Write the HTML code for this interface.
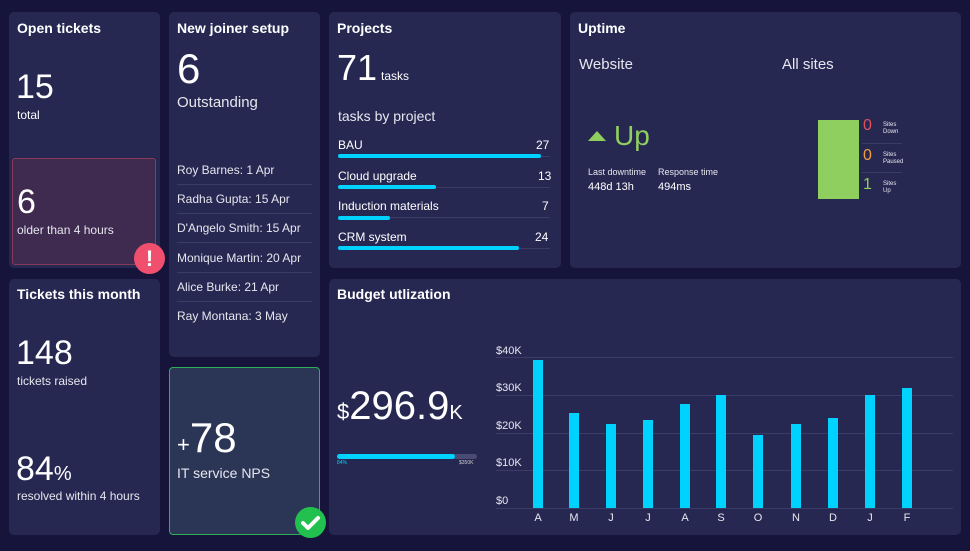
<!DOCTYPE html>
<html><head><meta charset="utf-8"><style>
*{margin:0;padding:0;box-sizing:border-box}
body{width:970px;height:551px;background:#16143a;font-family:"Liberation Sans",sans-serif;color:#fff;position:relative;overflow:hidden}
.c{position:absolute;background:#272852;border-radius:5px}
.a{position:absolute;white-space:nowrap}
.t{font-weight:bold;font-size:14px}
.li{position:absolute;left:8px;width:135px;font-size:12px;color:#e6e6ee;border-bottom:1px solid #3a3b66;height:29px;line-height:29px}
.bar{position:absolute;height:4px;background:#00d2ff;border-radius:2px}
.trk{position:absolute;height:1px;background:#3a3b66}
.g{position:absolute;left:496px;width:457px;height:1px;background:#3a3b66}
.b{position:absolute;width:10px;background:#00d2ff;bottom:43px}
.m{position:absolute;top:512px;font-size:11px;color:#e6e6ee;width:20px;text-align:center}
.y{position:absolute;left:496px;font-size:11px;color:#e6e6ee}
</style></head><body>
<!-- Open tickets -->
<div class="c" style="left:9px;top:12px;width:151px;height:256px"></div>
<div class="a t" style="left:17px;top:20px">Open tickets</div>
<div class="a" style="left:16px;top:68px;font-size:34px">15</div>
<div class="a" style="left:17px;top:108px;font-size:12px">total</div>
<div class="a" style="left:12px;top:158px;width:144px;height:107px;background:#3f2a50;border:1px solid #8a3a5a;border-radius:3px"></div>
<div class="a" style="left:17px;top:183px;font-size:34px">6</div>
<div class="a" style="left:17px;top:223px;font-size:12px;color:#e6e6ee">older than 4 hours</div>
<div class="a" style="left:134px;top:243px;width:31px;height:31px;border-radius:50%;background:#f0506e;text-align:center;font-weight:bold;font-size:22px;line-height:31px">!</div>
<!-- Tickets this month -->
<div class="c" style="left:9px;top:279px;width:151px;height:256px"></div>
<div class="a t" style="left:17px;top:286px">Tickets this month</div>
<div class="a" style="left:16px;top:334px;font-size:34px">148</div>
<div class="a" style="left:17px;top:374px;font-size:12px;color:#e6e6ee">tickets raised</div>
<div class="a" style="left:16px;top:450px;font-size:34px">84<span style="font-size:20px">%</span></div>
<div class="a" style="left:17px;top:489px;font-size:12px;color:#e6e6ee">resolved within 4 hours</div>
<!-- New joiner -->
<div class="c" style="left:169px;top:12px;width:151px;height:345px"></div>
<div class="a t" style="left:177px;top:20px">New joiner setup</div>
<div class="a" style="left:177px;top:45px;font-size:42px">6</div>
<div class="a" style="left:177px;top:94px;font-size:15px;color:#e6e6ee">Outstanding</div>
<div style="position:absolute;left:169px;top:0">
<div class="li" style="top:156px">Roy Barnes: 1 Apr</div>
<div class="li" style="top:185px">Radha Gupta: 15 Apr</div>
<div class="li" style="top:214px">D'Angelo Smith: 15 Apr</div>
<div class="li" style="top:244px">Monique Martin: 20 Apr</div>
<div class="li" style="top:273px">Alice Burke: 21 Apr</div>
<div class="li" style="top:302px;border:none">Ray Montana: 3 May</div>
</div>
<!-- NPS -->
<div class="a" style="left:169px;top:367px;width:151px;height:168px;background:#2b3556;border:1px solid #2fae5a;border-radius:4px"></div>
<div class="a" style="left:177px;top:414px;font-size:42px"><span style="font-size:22px">+</span>78</div>
<div class="a" style="left:177px;top:465px;font-size:14px;color:#e6e6ee">IT service NPS</div>
<div class="a" style="left:295px;top:507px;width:31px;height:31px;border-radius:50%;background:#21c04f"><svg width="31" height="31"><path d="M8 16l5 5 10-10" stroke="#fff" stroke-width="4" fill="none" stroke-linecap="round" stroke-linejoin="round"/></svg></div>
<!-- Projects -->
<div class="c" style="left:329px;top:12px;width:232px;height:256px"></div>
<div class="a t" style="left:337px;top:20px">Projects</div>
<div class="a" style="left:337px;top:47px;font-size:36px">71<span style="font-size:12px;margin-left:4px">tasks</span></div>
<div class="a" style="left:338px;top:108px;font-size:14px;color:#e6e6ee">tasks by project</div>
<div class="a" style="left:338px;top:138px;font-size:12px">BAU</div><div class="a" style="left:536px;top:138px;font-size:12px">27</div>
<div class="trk" style="left:338px;top:156px;width:212px"></div><div class="bar" style="left:338px;top:154px;width:203px"></div>
<div class="a" style="left:338px;top:169px;font-size:12px">Cloud upgrade</div><div class="a" style="left:538px;top:169px;font-size:12px">13</div>
<div class="trk" style="left:338px;top:187px;width:212px"></div><div class="bar" style="left:338px;top:185px;width:98px"></div>
<div class="a" style="left:338px;top:199px;font-size:12px">Induction materials</div><div class="a" style="left:542px;top:199px;font-size:12px">7</div>
<div class="trk" style="left:338px;top:217px;width:212px"></div><div class="bar" style="left:338px;top:216px;width:52px"></div>
<div class="a" style="left:338px;top:230px;font-size:12px">CRM system</div><div class="a" style="left:535px;top:230px;font-size:12px">24</div>
<div class="trk" style="left:338px;top:248px;width:212px"></div><div class="bar" style="left:338px;top:246px;width:181px"></div>
<!-- Uptime -->
<div class="c" style="left:570px;top:12px;width:391px;height:256px"></div>
<div class="a t" style="left:578px;top:20px">Uptime</div>
<div class="a" style="left:579px;top:56px;font-size:15px;color:#e6e6ee">Website</div>
<div class="a" style="left:782px;top:56px;font-size:15px;color:#e6e6ee">All sites</div>
<div class="a" style="left:588px;top:131px;width:0;height:0;border-left:9px solid transparent;border-right:9px solid transparent;border-bottom:10px solid #8fcf5f"></div>
<div class="a" style="left:614px;top:120px;font-size:28px;color:#8fcf5f">Up</div>
<div class="a" style="left:588px;top:167px;font-size:9px;color:#e6e6ee">Last downtime</div>
<div class="a" style="left:588px;top:181px;font-size:11px">448d 13h</div>
<div class="a" style="left:658px;top:167px;font-size:9px;color:#e6e6ee">Response time</div>
<div class="a" style="left:658px;top:181px;font-size:11px">494ms</div>
<div class="a" style="left:818px;top:120px;width:41px;height:79px;background:#8fcf5f"></div>
<div class="a" style="left:863px;top:117px;font-size:16px;color:#e0505a">0</div>
<div class="a" style="left:883px;top:122px;font-size:6px;line-height:7px;color:#e6e6ee">Sites<br>Down</div>
<div class="a" style="left:862px;top:143px;width:40px;height:1px;background:#3a3b66"></div>
<div class="a" style="left:863px;top:147px;font-size:16px;color:#f0a040">0</div>
<div class="a" style="left:883px;top:152px;font-size:6px;line-height:7px;color:#e6e6ee">Sites<br>Paused</div>
<div class="a" style="left:862px;top:172px;width:40px;height:1px;background:#3a3b66"></div>
<div class="a" style="left:863px;top:176px;font-size:16px;color:#8fcf5f">1</div>
<div class="a" style="left:883px;top:181px;font-size:6px;line-height:7px;color:#e6e6ee">Sites<br>Up</div>
<!-- Budget -->
<div class="c" style="left:329px;top:279px;width:632px;height:256px"></div>
<div class="a t" style="left:337px;top:286px">Budget utlization</div>
<div class="a" style="left:337px;top:384px;font-size:40px;font-weight:500"><span style="font-size:22px">$</span>296.9<span style="font-size:20px">K</span></div>
<div class="a" style="left:337px;top:454px;width:140px;height:5px;background:#4a4b75;border-radius:3px"></div>
<div class="a" style="left:337px;top:454px;width:118px;height:5px;background:#00d2ff;border-radius:3px"></div>
<div class="a" style="left:337px;top:460px;font-size:5px;color:#00d2ff">84%</div>
<div class="a" style="left:459px;top:460px;font-size:5px;color:#ccc">$350K</div>
<div class="g" style="top:357px"></div><div class="g" style="top:395px"></div><div class="g" style="top:433px"></div><div class="g" style="top:470px"></div><div class="g" style="top:508px"></div>
<div class="y" style="top:345px">$40K</div><div class="y" style="top:382px">$30K</div><div class="y" style="top:420px">$20K</div><div class="y" style="top:457px">$10K</div><div class="y" style="top:495px">$0</div>
<div class="b" style="left:533px;top:360px"></div>
<div class="b" style="left:569px;top:413px"></div>
<div class="b" style="left:606px;top:424px"></div>
<div class="b" style="left:643px;top:420px"></div>
<div class="b" style="left:680px;top:404px"></div>
<div class="b" style="left:716px;top:395px"></div>
<div class="b" style="left:753px;top:435px"></div>
<div class="b" style="left:791px;top:424px"></div>
<div class="b" style="left:828px;top:418px"></div>
<div class="b" style="left:865px;top:395px"></div>
<div class="b" style="left:902px;top:388px"></div>
<div class="m" style="left:528px">A</div><div class="m" style="left:564px">M</div><div class="m" style="left:601px">J</div><div class="m" style="left:638px">J</div><div class="m" style="left:675px">A</div><div class="m" style="left:711px">S</div><div class="m" style="left:748px">O</div><div class="m" style="left:786px">N</div><div class="m" style="left:823px">D</div><div class="m" style="left:860px">J</div><div class="m" style="left:897px">F</div>
</body></html>
